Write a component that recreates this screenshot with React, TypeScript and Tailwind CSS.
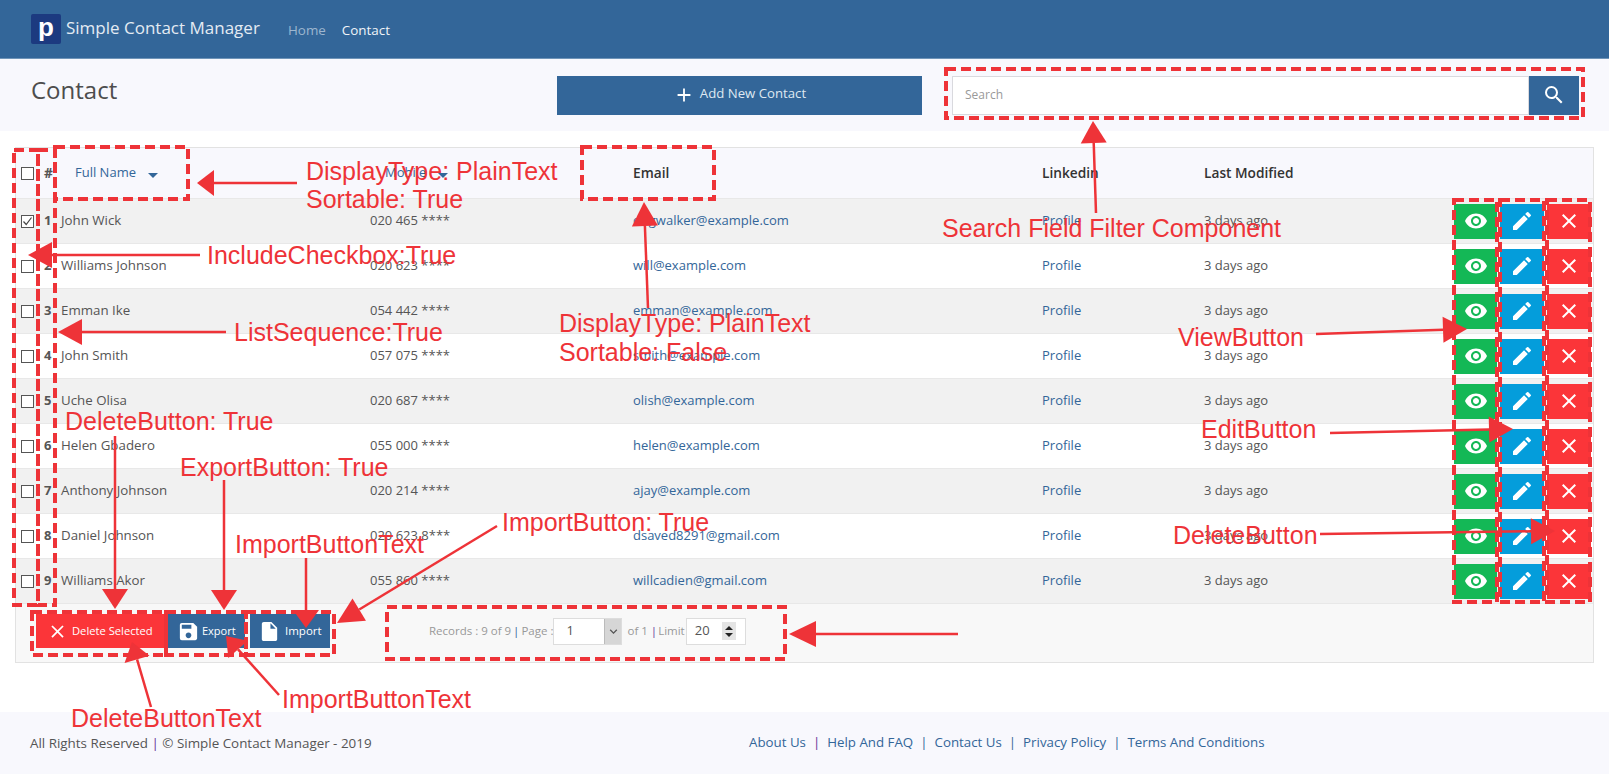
import React from 'react';
import {
  MdAdd,
  MdClose,
  MdCreate,
  MdInsertDriveFile,
  MdKeyboardArrowDown,
  MdRemoveRedEye,
  MdSave,
  MdSearch,
} from 'react-icons/md';

const contacts = [
  { id: 1, name: 'John Wick', mobile: '020 465 ****', email: 'dogwalker@example.com', checked: true },
  { id: 2, name: 'Williams Johnson', mobile: '020 623 ****', email: 'will@example.com' },
  { id: 3, name: 'Emman Ike', mobile: '054 442 ****', email: 'emman@example.com' },
  { id: 4, name: 'John Smith', mobile: '057 075 ****', email: 'smith@example.com' },
  { id: 5, name: 'Uche Olisa', mobile: '020 687 ****', email: 'olish@example.com' },
  { id: 6, name: 'Helen Gbadero', mobile: '055 000 ****', email: 'helen@example.com' },
  { id: 7, name: 'Anthony Johnson', mobile: '020 214 ****', email: 'ajay@example.com' },
  { id: 8, name: 'Daniel Johnson', mobile: '020 623 8***', email: 'dsaved8291@gmail.com' },
  { id: 9, name: 'Williams Akor', mobile: '055 860 ****', email: 'willcadien@gmail.com' },
];

const footerLinks = ['About Us', 'Help And FAQ', 'Contact Us', 'Privacy Policy', 'Terms And Conditions'];

// Callout labels drawn over the page: [text, left, vertical centre]
const labels: [string, number, number][] = [
  ['DisplayType: PlainText', 306, 171],
  ['Sortable: True', 306, 199],
  ['IncludeCheckbox:True', 207, 255],
  ['ListSequence:True', 234, 332],
  ['DeleteButton: True', 65, 421],
  ['ExportButton: True', 180, 467],
  ['ImportButtonText', 235, 544],
  ['ImportButton: True', 502, 522],
  ['DisplayType: PlainText', 559, 323],
  ['Sortable: False', 559, 352],
  ['Search Field Filter Component', 942, 228],
  ['ViewButton', 1178, 337],
  ['EditButton', 1201, 429],
  ['DeleteButton', 1173, 535],
  ['DeleteButtonText', 71, 718],
  ['ImportButtonText', 282, 699],
];

// Arrows: tail x, tail y, tip x, tip y, head length
const arrows: [number, number, number, number, number][] = [
  [297, 183, 197, 183, 17],
  [200, 255, 28, 255, 24],
  [226, 332, 58, 332, 24],
  [648, 308, 644, 202, 24],
  [1096, 213, 1093, 121, 22],
  [1316, 334, 1467, 329, 24],
  [1330, 433, 1513, 429, 24],
  [1320, 534, 1555, 531, 24],
  [115, 436, 115, 609, 20],
  [224, 480, 224, 610, 20],
  [306, 558, 306, 628, 18],
  [497, 526, 337, 623, 26],
  [151, 707, 132, 642, 18],
  [279, 695, 226, 636, 18],
  [958, 634, 789, 634, 27],
];

// Dashed boxes: x, y, w, h
const boxes: [number, number, number, number][] = [
  [14, 150, 24, 455],
  [38, 150, 17, 455],
  [55, 147, 133, 52],
  [582, 147, 132, 52],
  [946, 69, 637, 49],
  [1454, 200, 43, 402],
  [1500, 200, 44, 402],
  [1547, 200, 43, 402],
  [32, 612, 134, 43],
  [166, 612, 80, 43],
  [246, 612, 88, 43],
  [387, 607, 398, 52],
];

const Arrow = ({ a }: { a: [number, number, number, number, number] }) => {
  const [x1, y1, x2, y2, size] = a;
  const len = Math.hypot(x2 - x1, y2 - y1);
  const ux = (x2 - x1) / len;
  const uy = (y2 - y1) / len;
  const bx = x2 - ux * size;
  const by = y2 - uy * size;
  const head = `${x2},${y2} ${bx - uy * 13},${by + ux * 13} ${bx + uy * 13},${by - ux * 13}`;
  return (
    <g>
      <line x1={x1} y1={y1} x2={bx} y2={by} stroke="#ee3338" strokeWidth={2.5} />
      <polygon points={head} fill="#ee3338" />
    </g>
  );
};

const Annotations = () => (
  <>
    <svg className="absolute left-0 top-0 pointer-events-none" width={1609} height={778}>
      {boxes.map(([x, y, w, h], i) => (
        <rect key={i} x={x} y={y} width={w} height={h} fill="none" stroke="#ee3338" strokeWidth={4} strokeDasharray="10 5" />
      ))}
      {arrows.map((a, i) => (
        <Arrow key={i} a={a} />
      ))}
    </svg>
    {labels.map(([text, left, top], i) => (
      <span
        key={i}
        className="absolute -translate-y-1/2 whitespace-nowrap text-[25px] leading-none text-[#ee3338] font-['Liberation_Sans',sans-serif]"
        style={{ left, top }}
      >
        {text}
      </span>
    ))}
  </>
);

const Checkbox = ({ checked }: { checked?: boolean }) => (
  <div className="w-[13px] h-[13px] border border-[#555] bg-white flex items-center justify-center">
    {checked && (
      <svg width="11" height="11" viewBox="0 0 11 11">
        <path d="M1.5 5.5 L4.2 8.5 L9.5 1.5" fill="none" stroke="#444" strokeWidth="1.2" />
      </svg>
    )}
  </div>
);

const Caret = () => <span className="inline-block ml-[12px] mb-[-1px] border-x-[5px] border-x-transparent border-t-[5px] border-t-[#336699]" />;

const cols = 'grid grid-cols-[28px_17px_309px_263px_409px_162px_250px_1fr] items-center';

const App = () => {
  return (
    <div className="relative w-[1609px] h-[778px] overflow-hidden bg-white font-['Open_Sans',sans-serif] text-[13px] text-[#555]">
      <header className="h-[59px] bg-[#336699] border-b border-[#6f94b8] flex items-center pl-[31px]">
        <div className="w-[30px] h-[30px] rounded-[2px] bg-[#1c3a80] flex items-center justify-center text-white text-[26px] font-bold leading-none pb-[5px] font-['Liberation_Sans',sans-serif]">
          p
        </div>
        <span className="ml-[5px] w-[222px] text-[17px] text-[#e4ebf3] mb-[2px]">Simple Contact Manager</span>
        <nav className="flex gap-[16px] text-[13.4px] mt-[3px]">
          <span className="text-[#9db6cf]">Home</span>
          <span className="text-[#f0f4f8]">Contact</span>
        </nav>
      </header>

      <div className="h-[72px] bg-[#f8f8fd] flex items-center pl-[31px]">
        <h1 className="w-[526px] text-[24px] text-[#4d4d4d] font-normal mb-[11px]">Contact</h1>
        <button className="w-[365px] h-[39px] bg-[#336699] text-[#dfe8f1] text-[13.2px] flex items-center justify-center gap-[5px] pb-[3px]">
          <MdAdd className="text-white text-[22px] mt-[2px]" />
          Add New Contact
        </button>
        <div className="ml-[30px] w-[627px] h-[39px] flex">
          <div className="flex-1 bg-white border border-[#d9d9de] flex items-center pl-[12px] text-[12px] text-[#999]">Search</div>
          <button className="w-[50px] bg-[#336699] flex items-center justify-center text-white text-[24px]">
            <MdSearch />
          </button>
        </div>
      </div>

      <section className="mt-[16px] mx-[15px] w-[1579px] h-[516px] border border-[#e2e2e2] bg-[#f8f8f8]">
        <div className={`${cols} h-[51px] bg-[#f8f8fd] border-b border-[#e8e8e8] font-semibold text-[13.7px] text-[#333]`}>
          <div className="pl-[5px]">
            <Checkbox />
          </div>
          <span className="font-bold text-[#555]">#</span>
          <span className="pl-[14px] font-normal text-[13px] text-[#336699]">
            Full Name
            <Caret />
          </span>
          <span className="pl-[15px] font-normal text-[13px] text-[#336699]">
            Mobile
            <Caret />
          </span>
          <span>Email</span>
          <span>Linkedin</span>
          <span>Last Modified</span>
          <span />
        </div>

        {contacts.map((c) => (
          <div key={c.id} className={`${cols} h-[45px] border-b border-[#e8e8e8] ${c.id % 2 === 1 ? 'bg-[#f1f1f1]' : 'bg-white'}`}>
            <div className="pl-[5px]">
              <Checkbox checked={c.checked} />
            </div>
            <span className="font-bold">{c.id}</span>
            <span className="text-[13.3px]">{c.name}</span>
            <span>{c.mobile}</span>
            <span className="text-[#336699]">{c.email}</span>
            <span className="text-[#336699]">Profile</span>
            <span>3 days ago</span>
            <div className="flex text-white">
              <button className="w-[43px] h-[35px] bg-[#14b856] flex items-center justify-center text-[24px]">
                <MdRemoveRedEye />
              </button>
              <button className="ml-[3px] w-[44px] h-[35px] bg-[#049ddb] flex items-center justify-center text-[24px]">
                <MdCreate />
              </button>
              <button className="ml-[3px] w-[44px] h-[35px] bg-[#fb3539] flex items-center justify-center text-[24px]">
                <MdClose />
              </button>
            </div>
          </div>
        ))}

        <div className="flex items-center h-[57px] pl-[20px] pb-[3px]">
          <button className="w-[130px] h-[34px] bg-[#fb3539] text-white text-[11.2px] flex items-center pl-[11px] gap-[4px]">
            <MdClose className="text-[21px] shrink-0" />
            Delete Selected
          </button>
          <button className="w-[79px] h-[34px] bg-[#336699] text-white text-[11px] flex items-center pl-[11px] gap-[2px]">
            <MdSave className="text-[23px] shrink-0" />
            Export
          </button>
          <button className="ml-[5px] w-[80px] h-[34px] bg-[#336699] text-white text-[11.5px] flex items-center pl-[8px] gap-[4px]">
            <MdInsertDriveFile className="text-[23px] shrink-0" />
            Import
          </button>
          <div className="ml-[99px] flex items-center text-[11.5px] text-[#999]">
            <span>Records : 9 of 9</span>
            <span className="mx-[2px] text-[#336699]">|</span>
            <span>Page :</span>
            <div className="w-[69px] h-[27px] bg-white border border-[#ddd] flex items-center justify-between text-[#555] text-[13px]">
              <span className="pl-[12px]">1</span>
              <span className="w-[17px] h-full bg-[#d6d6d6] border-l border-[#bbb] flex items-center justify-center text-[#555]">
                <MdKeyboardArrowDown className="text-[15px]" />
              </span>
            </div>
            <span className="ml-[5px]">of 1</span>
            <span className="ml-[3px] mr-[1px] text-[#663399]">|</span>
            <span>Limit</span>
            <div className="ml-[1px] w-[60px] h-[27px] bg-white border border-[#ddd] flex items-center justify-between text-[#555] text-[13px]">
              <span className="pl-[8px]">20</span>
              <span className="mr-[9px] w-[14px] h-[18px] bg-[#e4e4e4] flex flex-col items-center justify-around py-[2px]">
                <span className="border-x-[4px] border-x-transparent border-b-[4px] border-b-[#222]" />
                <span className="border-x-[4px] border-x-transparent border-t-[4px] border-t-[#222]" />
              </span>
            </div>
          </div>
        </div>
      </section>

      <footer className="mt-[49px] h-[62px] bg-[#f8f8fd] flex items-center pl-[30px] text-[#555]">
        <span className="w-[719px] text-[13.4px]">
          All Rights Reserved <span className="text-[#663399]">|</span> © Simple Contact Manager - 2019
        </span>
        <div className="flex items-center text-[13.3px] text-[#336699]">
          {footerLinks.map((link, i) => (
            <React.Fragment key={link}>
              {i > 0 && <span className={`mx-[7px] ${i === 1 ? 'text-[#663399]' : 'text-[#336699]'}`}>|</span>}
              <span>{link}</span>
            </React.Fragment>
          ))}
        </div>
      </footer>

      <Annotations />
    </div>
  );
};

export default App;
